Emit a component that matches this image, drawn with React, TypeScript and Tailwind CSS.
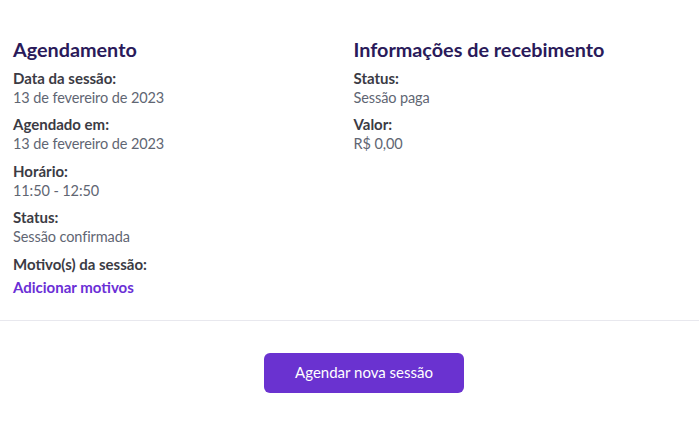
const Field = ({ label, value, link }: { label: string; value: string; link?: boolean }) => (
  <div className="flex flex-col">
    <span className="text-[15px] leading-5 font-bold text-[#3b3b44]">{label}</span>
    <span
      className={
        link
          ? 'mt-[3px] text-[15px] leading-5 font-bold text-[#6b2fd6]'
          : 'text-[14.5px] leading-5 tracking-[-0.1px] text-[#5f6673]'
      }
    >
      {value}
    </span>
  </div>
);

export default function App() {
  return (
    <div className="w-[699px] h-[423px] bg-white font-['Lato',sans-serif]">
      <div className="grid grid-cols-2 gap-2 px-[13px] pt-[37px] pb-[23px] border-b border-[#e8e8ee]">
        <section className="flex flex-col gap-[6.5px]">
          <h2 className="text-[19.8px] leading-6 font-bold text-[#2a1a5a]">Agendamento</h2>
          <Field label="Data da sessão:" value="13 de fevereiro de 2023" />
          <Field label="Agendado em:" value="13 de fevereiro de 2023" />
          <Field label="Horário:" value="11:50 - 12:50" />
          <Field label="Status:" value="Sessão confirmada" />
          <Field label="Motivo(s) da sessão:" value="Adicionar motivos" link />
        </section>
        <section className="flex flex-col gap-[6.5px]">
          <h2 className="text-[19.8px] leading-6 font-bold text-[#2a1a5a]">Informações de recebimento</h2>
          <Field label="Status:" value="Sessão paga" />
          <Field label="Valor:" value="R$ 0,00" />
        </section>
      </div>
      <div className="flex justify-center pl-[29px] pt-[32px]">
        <button className="w-[200px] h-10 rounded-md bg-[#6a32d0] text-white text-[15px]">Agendar nova sessão</button>
      </div>
    </div>
  );
}
